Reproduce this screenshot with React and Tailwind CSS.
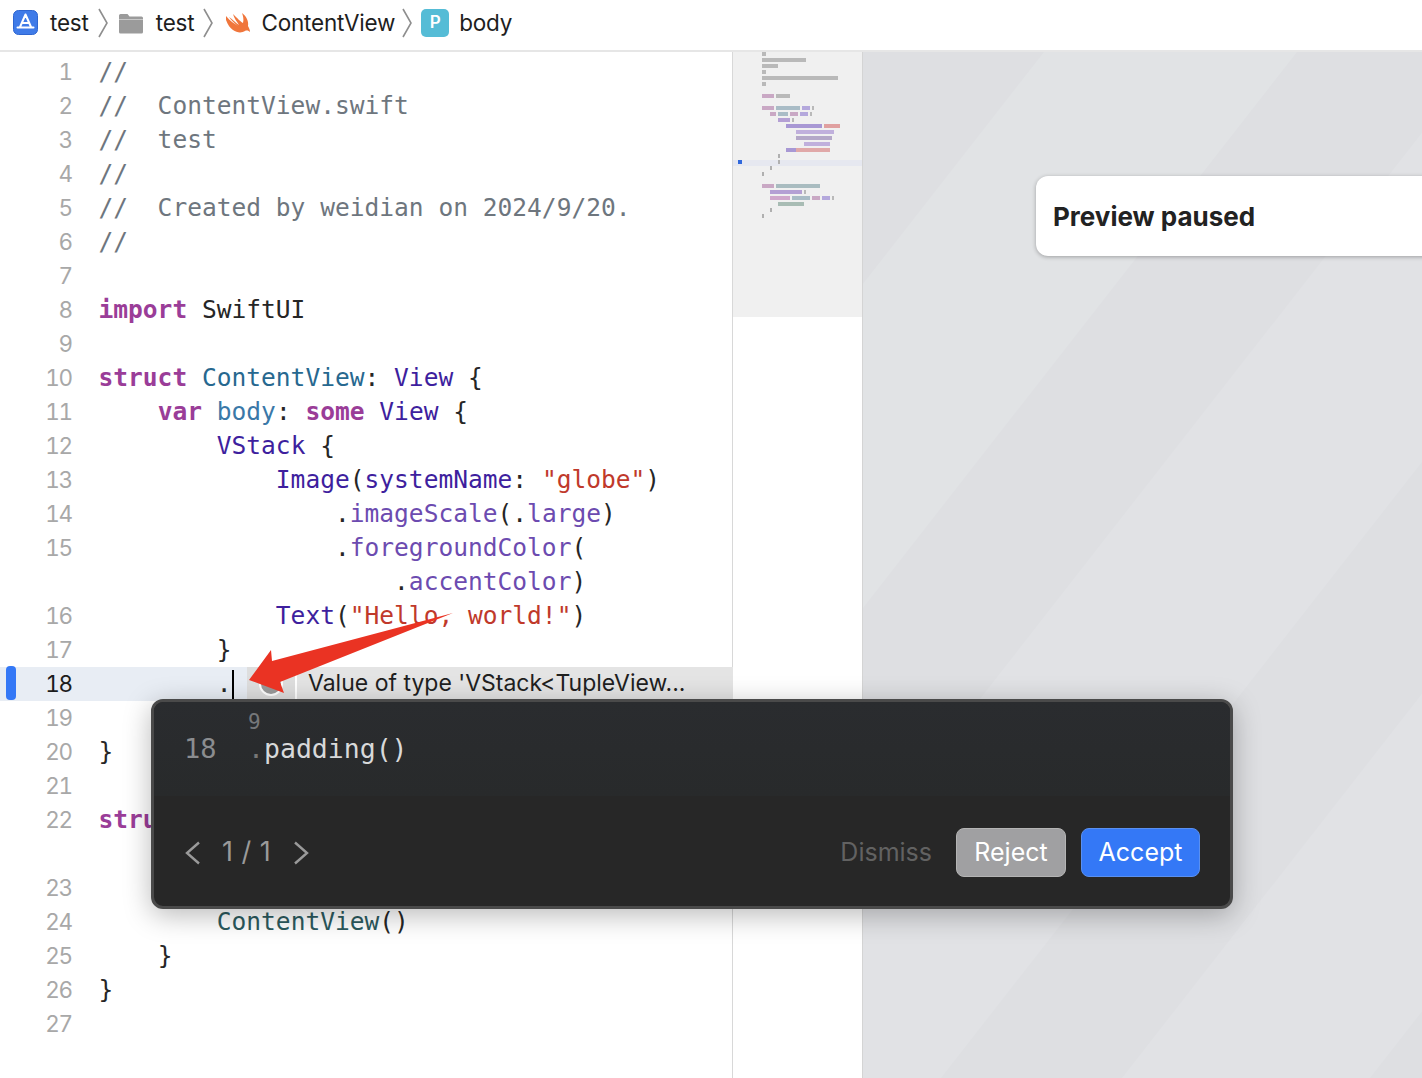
const K = 'text-[#9a3d98] font-bold';
const T = 'text-[#3e1f9e]';
const U = 'text-[#27688f]';
const B = 'text-[#3a78a8]';
const P = 'text-[#6c4bb0]';
const S = 'text-[#c0392b]';
const D = 'text-[#262626]';
const G = 'text-[#6e767e]';
const N = 'text-[#2c5a5e]';

// one entry per visual row: [line number, indent in chars, tokens]
const rows = [
  [1, 0, [[G, '//']]],
  [2, 0, [[G, '//  ContentView.swift']]],
  [3, 0, [[G, '//  test']]],
  [4, 0, [[G, '//']]],
  [5, 0, [[G, '//  Created by weidian on 2024/9/20.']]],
  [6, 0, [[G, '//']]],
  [7, 0, []],
  [8, 0, [[K, 'import'], [D, ' SwiftUI']]],
  [9, 0, []],
  [10, 0, [[K, 'struct'], [D, ' '], [U, 'ContentView'], [D, ': '], [T, 'View'], [D, ' {']]],
  [11, 4, [[K, 'var'], [D, ' '], [B, 'body'], [D, ': '], [K, 'some'], [D, ' '], [T, 'View'], [D, ' {']]],
  [12, 8, [[T, 'VStack'], [D, ' {']]],
  [13, 12, [[T, 'Image'], [D, '('], [T, 'systemName'], [D, ': '], [S, '"globe"'], [D, ')']]],
  [14, 16, [[D, '.'], [P, 'imageScale'], [D, '(.'], [P, 'large'], [D, ')']]],
  [15, 16, [[D, '.'], [P, 'foregroundColor'], [D, '(']]],
  ['', 20, [[D, '.'], [P, 'accentColor'], [D, ')']]],
  [16, 12, [[T, 'Text'], [D, '('], [S, '"Hello, world!"'], [D, ')']]],
  [17, 8, [[D, '}']]],
  [18, 8, [[D, '.']]],
  [19, 4, []],
  [20, 0, [[D, '}']]],
  [21, 0, []],
  [22, 0, [[K, 'struct']]],
  ['', 0, []],
  [23, 0, []],
  [24, 8, [[N, 'ContentView'], [D, '()']]],
  [25, 4, [[D, '}']]],
  [26, 0, [[D, '}']]],
  [27, 0, []],
];

const minimap = [
  [[0, 4, '#b9b9b9']],
  [[0, 44, '#b9b9b9']],
  [[0, 16, '#b9b9b9']],
  [[0, 4, '#b9b9b9']],
  [[0, 76, '#b9b9b9']],
  [[0, 4, '#b9b9b9']],
  [],
  [[0, 12, '#c9a8c4'], [14, 14, '#b9b9b9']],
  [],
  [[0, 12, '#c9a8c4'], [14, 24, '#a9bcc6'], [40, 8, '#b4a8dc'], [50, 2, '#b9b9b9']],
  [[8, 6, '#c9a8c4'], [16, 10, '#a9bcc6'], [28, 8, '#c9a8c4'], [38, 8, '#b4a8dc'], [48, 2, '#b9b9b9']],
  [[16, 12, '#b4a0d4'], [30, 2, '#b9b9b9']],
  [[24, 36, '#a898d4'], [62, 16, '#e0a0a0']],
  [[34, 38, '#c0b0dc']],
  [[34, 36, '#b4a8c8']],
  [[42, 26, '#c0b0dc']],
  [[24, 10, '#a898d4'], [34, 34, '#e0a8a8']],
  [[16, 2, '#b0b0b0']],
  [[16, 2, '#b0b0b0']],
  [[8, 2, '#b0b0b0']],
  [[0, 2, '#b0b0b0']],
  [],
  [[0, 12, '#c9a8c4'], [14, 44, '#a9bcc0']],
  [[8, 32, '#b4a0d4'], [42, 2, '#b9b9b9']],
  [[8, 20, '#d0a8cc'], [30, 18, '#a9bcc6'], [50, 8, '#c9a8c4'], [60, 8, '#b4a8dc'], [70, 2, '#b9b9b9']],
  [[16, 26, '#a8bcb4']],
  [[8, 2, '#b0b0b0']],
  [[0, 2, '#b0b0b0']],
];

function CodeRow({ num, indent, tokens }) {
  const active = num === 18;
  return (
    <div className={`flex h-[34px] items-center ${active ? 'bg-[#e8edf4]' : ''}`}>
      <div className={`w-[72px] shrink-0 text-right text-[22.5px] tracking-[-1.2px] tabular-nums font-['Inter',sans-serif] ${active ? 'text-[#1c1c1c]' : 'text-[#a8a8a8]'}`}>
        {num}
      </div>
      <div className="ml-[26.5px] min-w-0 whitespace-pre font-['DejaVu_Sans_Mono',monospace] text-[24.55px] leading-[34px]">
        {' '.repeat(indent)}
        {tokens.map(([cls, text], i) => <span key={i} className={cls}>{text}</span>)}
        {active && <span className="inline-block h-[30px] w-[2px] bg-black align-middle" />}
      </div>
    </div>
  );
}

function Chevron() {
  return (
    <svg width="12" height="30" viewBox="0 0 12 30" fill="none" stroke="#8e8e8e" strokeWidth="1.6" className="shrink-0">
      <path d="M2 1l8 14-8 14" />
    </svg>
  );
}

function Breadcrumbs() {
  return (
    <div className="flex h-[52px] items-center border-b-2 border-[#e6e6e6] bg-white pl-[13px] pb-[5px] text-[22.5px] tracking-[-0.2px] text-[#1e1e1e] font-['Inter',sans-serif]">
      <svg width="25" height="25" viewBox="0 0 25 25" className="shrink-0">
        <rect x="0.5" y="0.5" width="24" height="24" rx="5" fill="#3f7be8" stroke="#2f66d0" />
        <path d="M12.5 4.5L7 17M12.5 4.5L18 17M4.5 17.5h16M9 13h7" stroke="#fff" strokeWidth="2" strokeLinecap="round" fill="none" />
      </svg>
      <span className="ml-[12px]">test</span>
      <span className="ml-[8px]"><Chevron /></span>
      <svg width="26" height="22" viewBox="0 0 26 22" className="ml-[9px] shrink-0">
        <path d="M1 3.5a1.5 1.5 0 011.5-1.5h7l2 2.5h12a1.5 1.5 0 011.5 1.5v14a1.5 1.5 0 01-1.5 1.5h-21A1.5 1.5 0 011 20z" fill="#9b9b9b" />
        <path d="M1 7.5h24" stroke="#c9c9c9" strokeWidth="1" />
      </svg>
      <span className="ml-[12px]">test</span>
      <span className="ml-[8px]"><Chevron /></span>
      <svg width="26" height="22" viewBox="0 0 26 22" className="ml-[11px] shrink-0">
        <path d="M1 4c4 5 9 8 12 10C9 11 6 8 4 5c3 2 7 6 10 8-2-3-5-7-6-11 4 4 8 8 10 9 1-4 0-7-1-10 4 3 7 8 6 13 1 2 2 4 2 6-1-1-3-2-5-1-3 2-8 2-12-1-3-2-5-5-7-10z" fill="#f0763c" />
      </svg>
      <span className="ml-[10px]">ContentView</span>
      <span className="ml-[6px]"><Chevron /></span>
      <div className="ml-[8px] flex h-[28px] w-[28px] shrink-0 items-center justify-center rounded-[5px] bg-[#55bcd6] text-[17px] font-semibold text-white">P</div>
      <span className="ml-[10px]">body</span>
    </div>
  );
}

function Minimap() {
  return (
    <div className="relative h-[265px] w-[129px] shrink-0 bg-[#f0f0f0]">
      {minimap.map((bars, i) => (
        <div key={i} className={`relative h-[6px] ${i === 18 ? 'bg-[#e6e8f0]' : ''}`}>
          {bars.map(([x, w, c], j) => (
            <span key={j} className="absolute top-0 h-[4px]" style={{ left: 29 + x, width: w, backgroundColor: c }} />
          ))}
          {i === 18 && <span className="absolute left-[5px] top-0 h-[4px] w-[4px] bg-[#3068dc]" />}
        </div>
      ))}
    </div>
  );
}

function Canvas() {
  return (
    <div className="relative min-w-0 flex-1 overflow-hidden border-l border-[#d4d4d4] bg-[#dedfe2]">
      {/* faint diagonal stripes of the preview backdrop */}
      <svg className="absolute inset-0 h-full w-full" preserveAspectRatio="none" viewBox="863 52 559 1026">
        <path d="M1044 52H1297L496 1078H243z" fill="#e1e3e5" />
        <path d="M1485 52H1742L941 1078H684z" fill="#e1e2e5" />
        <path d="M1923 52H2171L1370 1078H1122z" fill="#e1e2e5" />
      </svg>
      <div className="absolute left-[173px] top-[124px] flex h-[80px] w-[420px] items-center rounded-l-[12px] bg-white pl-[17px] text-[26px] font-bold text-[#222] shadow-[0_1px_4px_rgba(0,0,0,0.3)] font-['Inter',sans-serif]">
        Preview paused
      </div>
    </div>
  );
}

function SuggestionPopup() {
  return (
    <div className="absolute left-[151px] top-[699px] h-[210px] w-[1082px] overflow-hidden rounded-[12px] border-[3px] border-[#4a4a4a] bg-[#272727] shadow-[0_6px_28px_rgba(0,0,0,0.28)]">
      <div className="relative h-[94px] bg-linear-to-b from-[#2a2c2f] to-[#282a2b] font-['DejaVu_Sans_Mono',monospace]">
        <span className="absolute left-[94px] top-[5px] text-[21px] text-[#75777a]">9</span>
        <span className="absolute left-[30px] top-[27px] text-[27px] text-[#8b8d90]">18</span>
        <span className="absolute left-[94px] top-[27px] whitespace-pre text-[26.5px] text-[#d8d9da]"><span className="text-[#777]">.</span>padding()</span>
      </div>
      <div className="flex h-[113px] items-center pl-[31px] pr-[30px] font-['Inter',sans-serif]">
        <svg width="16" height="24" viewBox="0 0 16 24" fill="none" stroke="#9a9a9a" strokeWidth="2.4"><path d="M14 1.5L2 12l12 10.5" /></svg>
        <span className="ml-[21px] text-[27px] tracking-[8.5px] text-[#9a9a9a]">1/1</span>
        <svg width="16" height="24" viewBox="0 0 16 24" fill="none" stroke="#9a9a9a" strokeWidth="2.4" className="ml-[14px]"><path d="M2 1.5L14 12 2 22.5" /></svg>
        <span className="ml-auto text-[25px] text-[#626262]">Dismiss</span>
        <button className="ml-[24px] flex h-[49px] w-[110px] items-center justify-center rounded-[8px] border border-[#b4b4b4] bg-[#a0a0a2] text-[25px] text-white">Reject</button>
        <button className="ml-[15px] flex h-[49px] w-[119px] items-center justify-center rounded-[8px] border border-[#5a90f0] bg-[#3478f6] text-[25px] text-white">Accept</button>
      </div>
    </div>
  );
}

export default function App() {
  return (
    <div className="relative h-[1078px] w-[1422px] overflow-hidden bg-white">
      <Breadcrumbs />
      <div className="flex h-[1026px]">
        <div className="w-[733px] shrink-0 border-r border-[#d8d8d8] pt-[3px]">
          {rows.map((r, i) => <CodeRow key={i} num={r[0]} indent={r[1]} tokens={r[2]} />)}
        </div>
        <Minimap />
        <Canvas />
      </div>

      {/* active line marker and inline issue */}
      <div className="absolute left-[6px] top-[666px] h-[34px] w-[10px] rounded-[4px] bg-[#3478f6]" />
      <div className="absolute left-[247px] top-[667px] flex h-[33px] w-[486px] items-center bg-[#e4e4e4] text-[23px] text-[#1f1f1f] font-['Inter',sans-serif]">
        <div className="flex h-full w-[50px] items-center justify-center border-r-2 border-white bg-[#dedede]">
          <span className="h-[24px] w-[24px] rounded-full border-2 border-white bg-[#9a9a9a]" />
        </div>
        <span className="ml-[11px] whitespace-nowrap">Value of type 'VStack&lt;TupleView...</span>
      </div>

      <SuggestionPopup />

      {/* red annotation arrow */}
      <svg className="absolute left-[240px] top-[605px]" width="220" height="95" viewBox="0 0 220 95">
        <path d="M9 75L31 45 32 56 213 8 40 77 44 88z" fill="#ea3323" />
      </svg>
    </div>
  );
}
